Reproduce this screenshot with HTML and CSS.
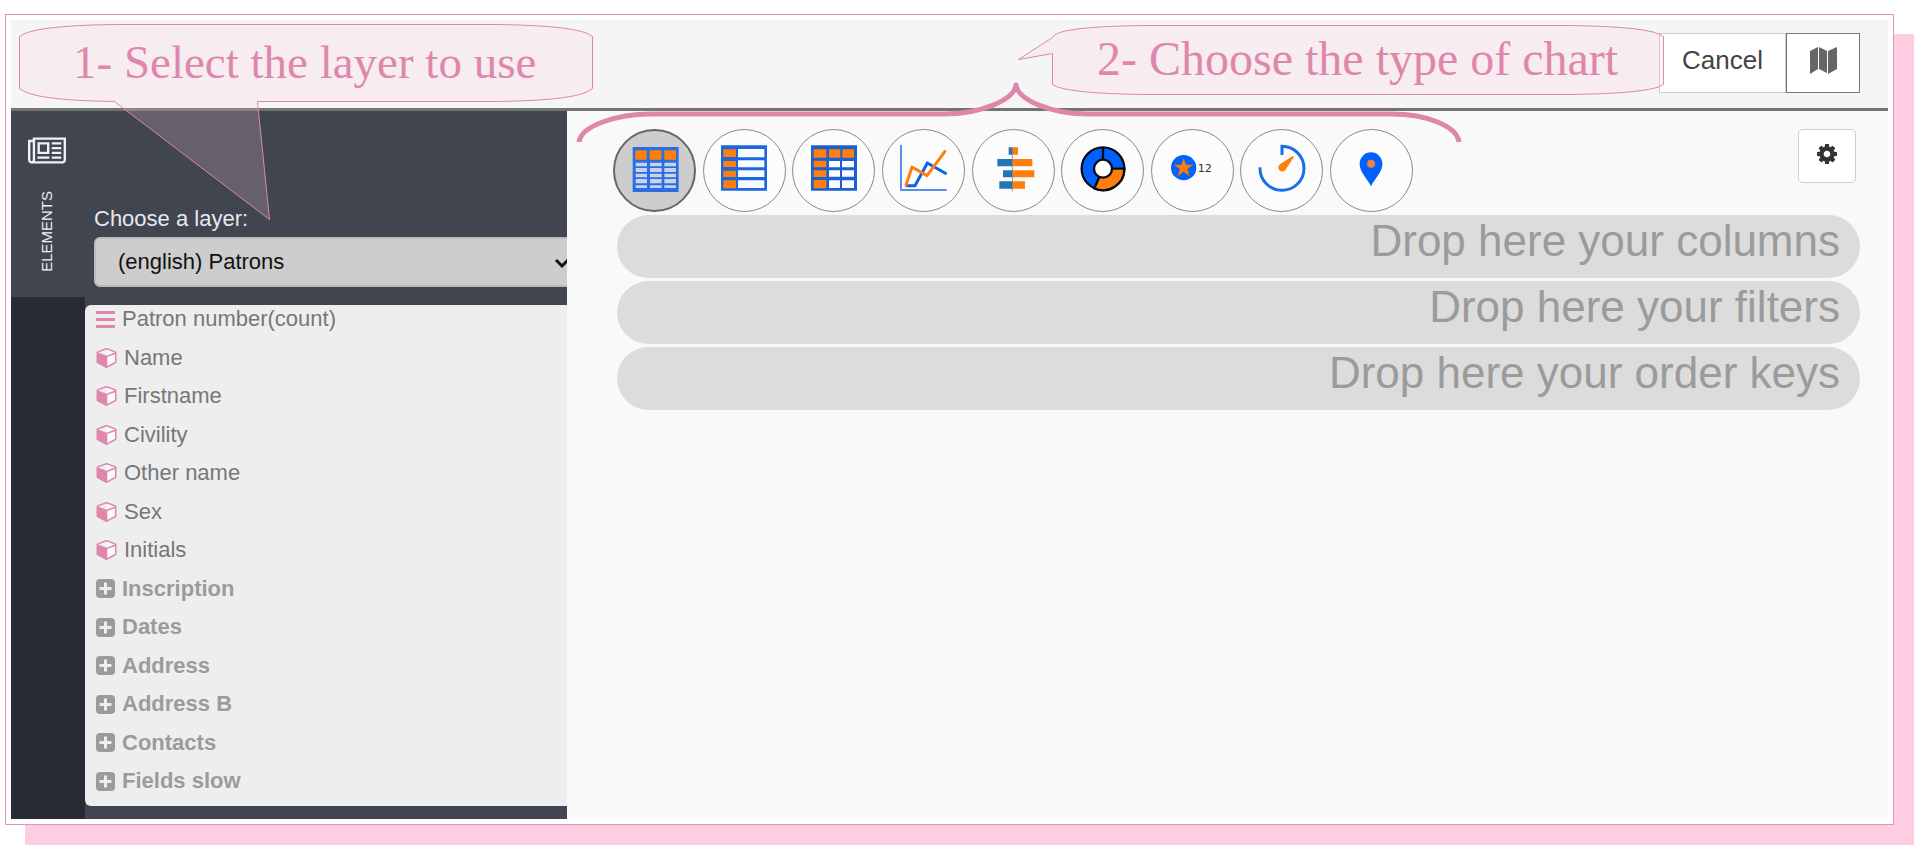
FILE: index.html
```html
<!DOCTYPE html>
<html lang="en">
<head>
  <meta charset="UTF-8" />
  <meta name="viewport" content="width=device-width, initial-scale=1" />
  <title>Chart editor - Patrons</title>
  <link rel="stylesheet" href="styles.css">
</head>
<body>

  <!-- Shared icons -->
  <svg class="icon-defs" aria-hidden="true">
    <symbol id="cube" viewBox="0 128 1664 1664">
      <path fill="#fafafa" d="M832 200l760 280v810l-760 420z"/>
      <path fill-rule="evenodd" d="M896 1629l640-349v-636l-640 233v752zM832 764l698-254-698-254-698 254zM1664 512v768q0 35-18 65t-49 47l-704 384q-28 16-61 16t-61-16l-704-384q-31-17-49-47t-18-65v-768q0-40 23-73t61-47l704-256q22-8 44-8t44 8l704 256q38 14 61 47t23 73z"/>
    </symbol>
    <symbol id="plus" viewBox="0 0 19 19">
      <rect width="19" height="19" rx="4"/>
      <path d="M9.500 3.500v12M3.500 9.500h12" stroke="#eee" stroke-width="3"/>
    </symbol>
  </svg>

  <div class="frame">
    <div class="app">

      <header class="topbar">
        <button class="btn-cancel">Cancel</button>
        <button class="btn-map" aria-label="Map">
          <svg width="27" height="27" viewBox="0 0 27 27" fill="#666"><path d="M0 4l8-4v22l-8 5zM9 0l8 4v22l-8-4zM18 4l9-4v22l-9 5z"/></svg>
        </button>
      </header>

      <div class="content">
        <aside class="sidebar">
          <nav class="rail">
            <button class="rail-tab">
              <svg width="38" height="27" viewBox="0 128 2048 1408" fill="#eef1f5" fill-rule="evenodd"><path d="M1024 512h-384v384h384v-384zM1152 1152v128h-640v-128h640zM1152 384v640h-640v-640h640zM1792 1152v128h-512v-128h512zM1792 896v128h-512v-128h512zM1792 640v128h-512v-128h512zM1792 384v128h-512v-128h512zM256 1344v-960h-128v960q0 26 19 45t45 19 45-19 19-45zM1920 1344v-1088h-1536v1088q0 33-11 64h1483q26 0 45-19t19-45zM2048 128v1216q0 80-56 136t-136 56h-1664q-80 0-136-56t-56-136v-1088h256v-128h1792z"/></svg>
              <span>ELEMENTS</span>
            </button>
          </nav>

          <div class="panel">
            <label for="layer">Choose a layer:</label>
            <div class="layer-box">
              <select id="layer">
                <option>(english) Patrons</option>
              </select>
              <svg class="arrow" width="14" height="10" viewBox="0 0 14 10" fill="none" stroke="#111" stroke-width="3"><path d="M1 1l6 6 6-6"/></svg>
            </div>

            <ul class="fields">
              <li><div class="field"><svg width="19" height="17" viewBox="0 0 19 17"><path d="M0 0h19v3H0zM0 7h19v3H0zM0 14h19v3H0z"/></svg>Patron number(count)</div></li>
              <li><div class="field"><svg width="21" height="20"><use href="#cube"/></svg>Name</div></li>
              <li><div class="field"><svg width="21" height="20"><use href="#cube"/></svg>Firstname</div></li>
              <li><div class="field"><svg width="21" height="20"><use href="#cube"/></svg>Civility</div></li>
              <li><div class="field"><svg width="21" height="20"><use href="#cube"/></svg>Other name</div></li>
              <li><div class="field"><svg width="21" height="20"><use href="#cube"/></svg>Sex</div></li>
              <li><div class="field"><svg width="21" height="20"><use href="#cube"/></svg>Initials</div></li>
              <li><button class="field group"><svg width="19" height="19"><use href="#plus"/></svg>Inscription</button></li>
              <li><button class="field group"><svg width="19" height="19"><use href="#plus"/></svg>Dates</button></li>
              <li><button class="field group"><svg width="19" height="19"><use href="#plus"/></svg>Address</button></li>
              <li><button class="field group"><svg width="19" height="19"><use href="#plus"/></svg>Address B</button></li>
              <li><button class="field group"><svg width="19" height="19"><use href="#plus"/></svg>Contacts</button></li>
              <li><button class="field group"><svg width="19" height="19"><use href="#plus"/></svg>Fields slow</button></li>
            </ul>
          </div>
        </aside>

        <main class="editor">
          <div class="toolbar">
            <div class="charts">
              <button class="chart active" aria-label="Table">
                <svg viewBox="0 0 138 138">
                  <path fill="#2a6ee6" d="M2 6h138v135H2z"/>
                  <path fill="#ff7f0e" d="M10 16h34v28H10zM53 16h35v28H53zM97 16h35v28H97z"/>
                  <path fill="#c9d3e8" d="M11 53h34v11H11zM54 53h35v11H54zM97 53h35v11H97zM11 69h34v12H11zM54 69h35v12H54zM97 69h35v12H97zM11 86h34v11H11zM54 86h35v11H54zM97 86h35v11H97zM11 102h34v13H11zM54 102h35v13H54zM97 102h35v13H97zM11 121h34v8H11zM54 121h35v8H54zM97 121h35v8H97z"/>
                </svg>
              </button>
              <button class="chart" aria-label="List">
                <svg viewBox="0 0 138 138">
                  <path fill="#1c66e0" d="M0 1h138v136H0z"/>
                  <path fill="#ff7f0e" d="M7 13h38v23H7zM7 48h38v18H7zM7 77h38v19H7zM7 106h38v24H7z"/>
                  <path fill="#f8fbff" d="M51 12h79v25H51zM51 46h79v21H51zM51 76h79v20H51zM51 106h79v23H51z"/>
                </svg>
              </button>
              <button class="chart" aria-label="Cross table">
                <svg viewBox="0 0 138 138">
                  <path fill="#1c5fd0" d="M0 1h138v136H0z"/>
                  <path fill="#ff7f0e" d="M8 13h38v25H8zM54 13h34v25H54zM94 13h35v25H94zM8 47h38v20H8zM8 76h38v20H8zM8 105h38v25H8z"/>
                  <path fill="#f8fbff" d="M54 48h33v19H54zM93 48h36v19H93zM54 76h33v19H54zM93 76h36v19H93zM54 106h33v23H54zM93 106h36v23H93z"/>
                </svg>
              </button>
              <button class="chart" aria-label="Line chart">
                <svg viewBox="0 0 138 138" fill="none">
                  <path stroke="#5590e6" stroke-width="6" d="M3 0v135h137"/>
                  <path stroke="#0d62e8" stroke-width="9" d="M17 122h28l37-68 58 33"/>
                  <path stroke="#ff7f0e" stroke-width="9" stroke-linejoin="round" stroke-linecap="round" d="M18 121l18-55 45 26 54-73"/>
                </svg>
              </button>
              <button class="chart" aria-label="Bar chart">
                <svg viewBox="0 0 138 138">
                  <path fill="#1f77b4" d="M56 7h11v22H56zM22 42h45v22H22zM39 76h28v21H39zM28 109h39v22H28z"/>
                  <path fill="#ff7f0e" d="M67 7h17v22H67zM67 42h60v22H67zM67 76h66v21H67zM67 109h38v22H67z"/>
                  <path stroke="#666" stroke-width="2" d="M67 6v133"/>
                </svg>
              </button>
              <button class="chart" aria-label="Pie chart">
                <svg viewBox="0 0 138 138" stroke="#0a0a14" stroke-width="7">
                  <circle cx="69" cy="71" r="64" fill="#0061ff"/>
                  <path fill="#ff7f0e" d="M69 71h64a64 64 0 0 1-90 59z"/>
                  <path d="M69 71V7"/>
                  <circle cx="69" cy="71" r="27" fill="#fff"/>
                </svg>
              </button>
              <button class="chart" aria-label="Indicator">
                <svg viewBox="0 0 138 138">
                  <circle cx="44" cy="68" r="38" fill="#0061ff"/>
                  <path fill="#ff7f0e" stroke="#b5713f" stroke-width="3" d="M44 41l7 19h20l-16 12 6 20-17-12-17 12 6-20-16-12h20z"/>
                  <text class="indicator" x="86" y="81">12</text>
                </svg>
              </button>
              <button class="chart" aria-label="Gauge">
                <svg viewBox="0 0 138 138">
                  <path fill="none" stroke="#1a6fe8" stroke-width="9" d="M3 67a66 66 0 1 0 66-63v26"/>
                  <path fill="#ff7f0e" d="M101 33l4 3-24 36a12 12 0 1 1-17-15z"/>
                </svg>
              </button>
              <button class="chart" aria-label="Map chart">
                <svg viewBox="0 0 138 138">
                  <path fill="#0061ff" d="M66 124C56 101 32 83 32 56a34 34 0 0 1 68 0c0 27-24 45-34 68z"/>
                  <circle cx="66" cy="56" r="12" fill="#f08040"/>
                </svg>
              </button>
            </div>

            <button class="btn-settings" aria-label="Settings">
              <svg width="20" height="20" viewBox="128 128 1536 1536" fill="#333" fill-rule="evenodd"><path d="M1152 896q0-106-75-181t-181-75-181 75-75 181 75 181 181 75 181-75 75-181zm512-109v222q0 12-8 23t-20 13l-185 28q-19 54-39 91 35 50 107 138 10 12 10 25t-9 23q-27 37-99 108t-94 71q-12 0-26-9l-138-108q-44 23-91 38-16 136-29 186-7 28-36 28h-222q-14 0-24.500-8.500t-11.500-21.500l-28-184q-49-16-90-37l-141 107q-10 9-25 9-14 0-25-11-126-114-165-168-7-10-7-23 0-12 8-23 15-21 51-66.500t54-70.500q-27-50-41-99l-183-27q-13-2-21-12.500t-8-23.500v-222q0-12 8-23t19-13l186-28q14-46 39-92-40-57-107-138-10-12-10-24 0-10 9-23 26-36 98.500-107.500t94.500-71.500q13 0 26 10l138 107q44-23 91-38 16-136 29-186 7-28 36-28h222q14 0 24.500 8.500t11.500 21.500l28 184q49 16 90 37l142-107q9-9 24-9 13 0 25 10 129 119 165 170 7 8 7 22 0 12-8 23-15 21-51 66.500t-54 70.500q26 50 41 98l183 28q13 2 21 12.500t8 23.500z"/></svg>
            </button>
          </div>

          <div class="drops">
            <div class="drop">Drop here your columns</div>
            <div class="drop">Drop here your filters</div>
            <div class="drop">Drop here your order keys</div>
          </div>
        </main>
      </div>

      <!-- Help callouts drawn over the editor -->
      <div class="callout callout-layer">
        <svg width="575" height="198" viewBox="0.5 0.5 575 198"><path d="M96 1H478Q562 2 574 13V65Q562 77 478 78H239L251 196 96 78Q14 77 1 65V13Q14 2 96 1z"/></svg>
        <p>1- Select the layer to use</p>
      </div>
      <div class="callout callout-chart">
        <svg width="648" height="71" viewBox="0.5 0.5 648 71"><path d="M127 1H552Q634 2 646 12V60Q634 69 552 70H127Q47 69 35 60V29L1 35 35 13Q38 2 127 1z"/></svg>
        <p>2- Choose the type of chart</p>
      </div>
      <svg class="brace" width="886" height="62" viewBox="0 0 886 62" fill="none" stroke="#df87ab" stroke-width="5" stroke-linejoin="round"><path d="M3 60C5 44 40 32 75 32H368C405 32 438 18 440 3C442 18 475 32 512 32H816C850 32 881 44 883 60"/></svg>

    </div>
  </div>

</body>
</html>
```

FILE: styles.css
```css
* {
  box-sizing: border-box;
}
body {
  margin: 0;
  padding: 14px 26px 25px 5px;
  min-height: 100vh;
  display: flex;
  background-color: #fff;
  font-family: "Liberation Sans", Arial, sans-serif;
  font-size: 22px;
  line-height: 26px;
}
button {
  padding: 0;
  border: none;
  background: none;
  font: inherit;
  color: inherit;
  cursor: pointer;
}
svg {
  display: block;
  flex: none;
  overflow: visible;
}
.icon-defs {
  position: absolute;
  width: 0;
  height: 0;
}
.frame {
  flex: 1;
  display: flex;
  padding: 5px;
  border: 1px solid #e393b4;
  background-color: #fff;
  box-shadow: 20px 20px 0 #fecde2;
}
.app {
  position: relative;
  flex: 1;
  display: flex;
  flex-direction: column;
  background-color: #f9f9f9;
}

/* Top bar */
.topbar {
  display: flex;
  justify-content: flex-end;
  padding: 13px 28px 15px;
  background-color: #f5f5f5;
  border-bottom: 3px solid #737373;
}
.btn-cancel {
  width: 127px;
  height: 60px;
  border: 1px solid #ccc;
  background-color: #fff;
  color: #444;
  font-size: 26px;
  padding-bottom: 6px;
}
.btn-map {
  display: flex;
  justify-content: center;
  align-items: center;
  width: 74px;
  height: 60px;
  padding-bottom: 6px;
  border: 1px solid #777;
  background-color: #fff;
}
.content {
  flex: 1;
  display: flex;
}

/* Sidebar */
.sidebar {
  flex: none;
  display: flex;
  width: 556px;
  overflow: hidden;
  background-color: #404550;
}
.rail {
  width: 74px;
  background-color: #272b33;
}
.rail-tab {
  display: flex;
  flex-direction: column;
  align-items: center;
  gap: 27px;
  width: 100%;
  height: 186px;
  padding: 26px 2px 0 0;
  background-color: #404550;
  color: #eef1f5;
}
.rail-tab span {
  writing-mode: vertical-rl;
  transform: rotate(180deg);
  font-size: 15px;
  line-height: 18px;
}
.panel {
  flex: 1;
  min-width: 0;
  display: flex;
  flex-direction: column;
  padding: 95px 0 13px;
}
.panel label {
  padding-left: 9px;
  color: #e6e9ee;
}
.layer-box {
  position: relative;
  margin: 5px -40px 18px 9px;
}
.layer-box select {
  display: block;
  appearance: none;
  width: 100%;
  height: 50px;
  padding: 0 22px 0 22px;
  border: 2px solid #bbb;
  border-radius: 6px;
  background-color: #cdcdcd;
  color: #111;
  font: inherit;
}
.arrow {
  position: absolute;
  right: 38px;
  top: 22px;
}
.fields {
  flex: 1;
  display: flex;
  flex-direction: column;
  margin: 0;
  padding: 0;
  list-style: none;
  border-radius: 6px 0 0 6px;
  background-color: #eee;
}
.fields li {
  flex: 1;
  padding: 1px 0 0 11px;
}
.field {
  display: flex;
  align-items: center;
  gap: 7px;
  height: 26px;
  color: #777;
}
.field svg {
  fill: #df87ab;
}
.group {
  font-weight: bold;
  color: #9b9b9b;
}
.group svg {
  fill: #9b9b9b;
}

/* Editor */
.editor {
  flex: 1;
}
.toolbar {
  display: flex;
  justify-content: space-between;
  padding: 18px 32px 0 46px;
}
.charts {
  display: flex;
  justify-content: space-between;
  width: 800px;
}
.chart {
  display: flex;
  justify-content: center;
  align-items: center;
  width: 83px;
  height: 83px;
  padding-bottom: 6px;
  border: 1px solid #888;
  border-radius: 50%;
  background-color: #fcfcfc;
}
.chart svg {
  width: 46px;
  height: 46px;
}
.chart.active {
  border: 2px solid #666;
  background-color: #cdcdcd;
}
.indicator {
  font-family: "DejaVu Sans", sans-serif;
  font-size: 34px;
  fill: #333;
}
.btn-settings {
  display: flex;
  justify-content: center;
  align-items: center;
  width: 58px;
  height: 54px;
  padding-bottom: 5px;
  border: 1px solid #ccc;
  border-radius: 5px;
  background-color: #fff;
}
.drops {
  display: flex;
  flex-direction: column;
  gap: 3px;
  padding: 3px 28px 0 50px;
}
.drop {
  height: 63px;
  padding-right: 20px;
  border-radius: 32px;
  background-color: #dcdcdc;
  color: #9b9b9b;
  font-size: 44px;
  line-height: 52px;
  text-align: right;
}

/* Help callouts */
.callout {
  position: absolute;
  pointer-events: none;
}
.callout path {
  fill: rgba(255, 200, 220, 0.2);
  stroke: #df87ab;
}
.callout p {
  position: absolute;
  top: 0;
  left: 0;
  margin: 0;
  color: #df87ab;
  font-family: "Liberation Serif", "Times New Roman", serif;
  font-size: 48px;
  line-height: 68px;
  white-space: nowrap;
}
.callout-layer {
  left: 8px;
  top: 4px;
}
.callout-layer p {
  padding: 4px 0 0 54px;
  font-size: 47px;
}
.callout-chart {
  left: 1007px;
  top: 5px;
}
.callout-chart p {
  padding-left: 79px;
}
.brace {
  position: absolute;
  left: 565px;
  top: 62px;
  pointer-events: none;
}
```
